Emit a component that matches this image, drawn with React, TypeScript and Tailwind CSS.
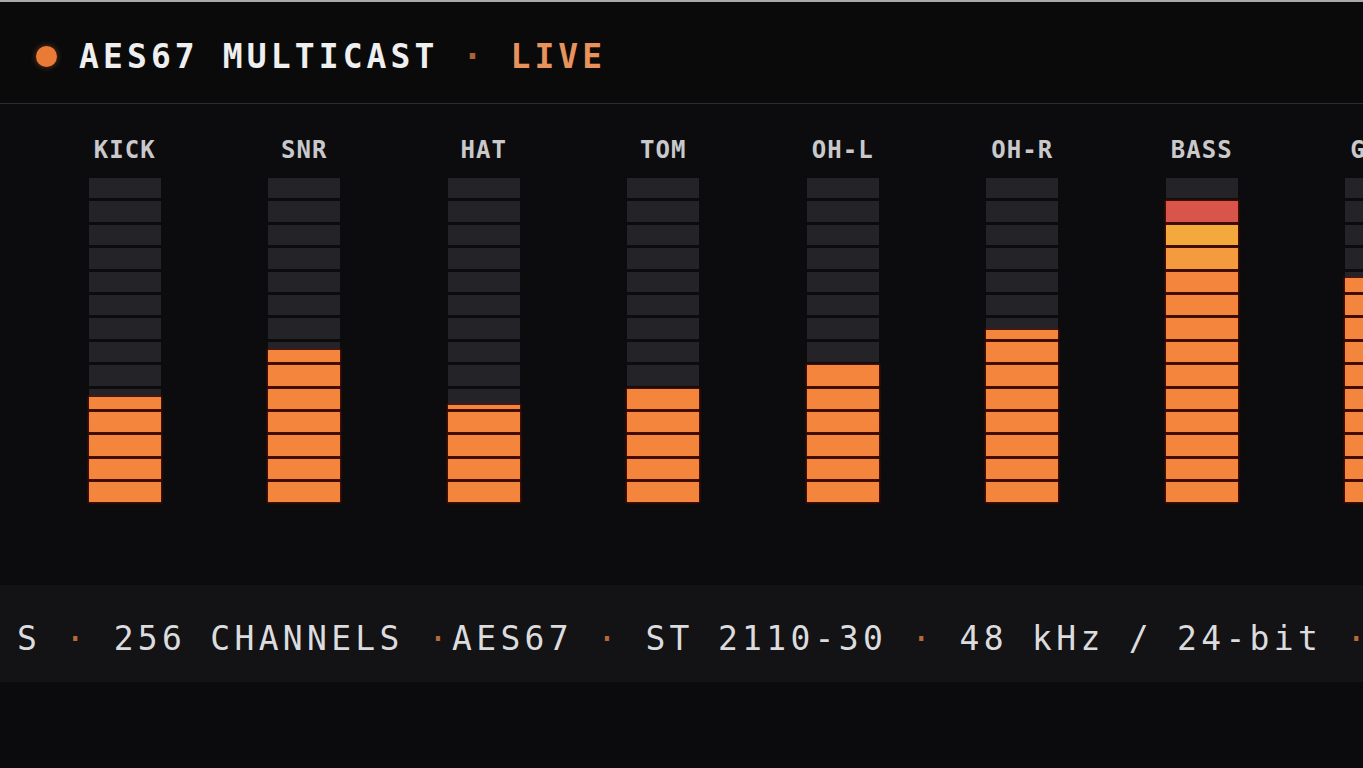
import React from "react";

type Ch = { name: string; level: number };

const channels: Ch[] = [
  { name: "KICK", level: 4.6 },
  { name: "SNR", level: 6.6 },
  { name: "HAT", level: 4.2 },
  { name: "TOM", level: 5 },
  { name: "OH-L", level: 6 },
  { name: "OH-R", level: 7.45 },
  { name: "BASS", level: 13 },
  { name: "GTR1", level: 9.7 },
];

const SEGMENTS = 14;

function segColor(i: number): string {
  if (i >= 12) return "bg-[#d9544a]";
  if (i === 11) return "bg-[#f4a93c]";
  if (i === 10) return "bg-[#f39b3e]";
  return "bg-[#f3853c]";
}

function Meter({ level }: { level: number }) {
  const segs = Array.from({ length: SEGMENTS }, (_, k) => SEGMENTS - 1 - k);
  return (
    <div className="w-[72px] flex flex-col gap-[3px]">
      {segs.map((i) => {
        const fill = Math.max(0, Math.min(1, level - i));
        return (
          <div
            key={i}
            className="relative h-[20.4px] bg-[#242428] flex flex-col justify-end"
          >
            {fill > 0 && (
              <div
                className={`w-full ${segColor(i)} shadow-[0_0_2px_1px_rgba(100,16,0,0.95)]`}
                style={{ height: `${fill * 100}%` }}
              />
            )}
          </div>
        );
      })}
    </div>
  );
}

function Dot() {
  return <span className="text-[#b8693a]">·</span>;
}

export default function App() {
  return (
    <div
      className="w-[1363px] h-[768px] overflow-hidden bg-[#0c0c0e] flex flex-col"
      style={{ fontFamily: '"DejaVu Sans Mono", "Liberation Mono", monospace' }}
    >
      <div className="h-[2px] bg-[#a9a9a9] flex-none" />
      <header className="h-[102px] flex-none flex items-center pt-[7px] pl-[36px] gap-[22px] border-b border-[#2d2d31] bg-[#0a0a0b]">
        <div className="w-[21px] h-[21px] rounded-full bg-[#e97b36] shadow-[0_0_6px_rgba(233,123,54,0.45)]" />
        <div className="text-[33px] leading-none font-bold tracking-[4.1px] text-[#efefef] whitespace-nowrap">
          AES67 MULTICAST <span className="text-[#a8633a]">·</span>{" "}
          <span className="text-[#e8925c]">LIVE</span>
        </div>
      </header>

      <div className="h-[481px] flex-none flex pl-[35px] pt-[34px]">
        {channels.map((c) => (
          <div key={c.name} className="w-[179.5px] flex-none flex flex-col items-center">
            <div className="text-[24px] leading-[24px] font-bold tracking-[1px] text-[#c9c9cb]">
              {c.name}
            </div>
            <div className="mt-[16px]">
              <Meter level={c.level} />
            </div>
          </div>
        ))}
      </div>

      <div className="h-[97px] flex-none bg-[#131316] flex items-center pt-[9px] pl-[17px] whitespace-nowrap">
        <div className="text-[33px] leading-none tracking-[4.3px] text-[#dcdcde]">
          S <Dot /> 256 CHANNELS <Dot />AES67 <Dot /> ST 2110-30 <Dot /> 48 kHz / 24-bit <Dot />
        </div>
      </div>

      <div className="flex-1 bg-[#0b0b0e]" />
    </div>
  );
}
